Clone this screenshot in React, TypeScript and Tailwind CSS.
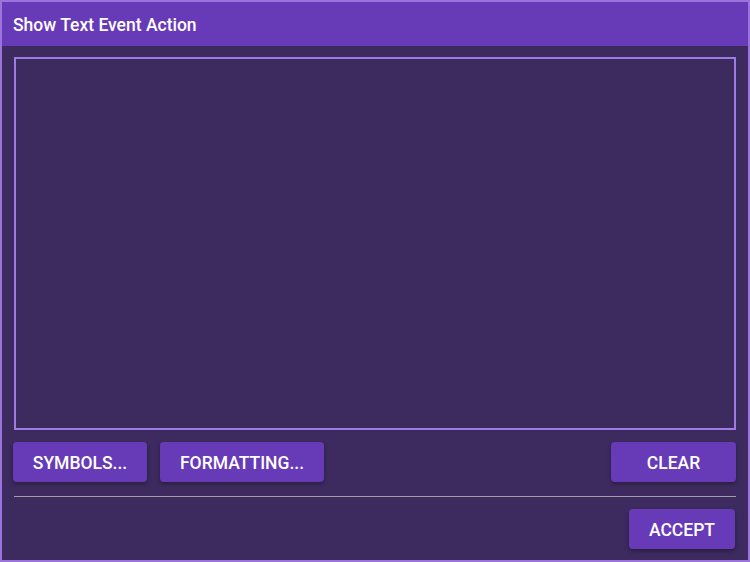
import React from "react";

const btn =
  "h-[40px] rounded-[4px] bg-[#673ab7] text-white text-[17.5px] font-medium uppercase flex items-center justify-center pt-[2px] shadow-[0_2px_4px_rgba(0,0,0,0.35)]";

export default function App() {
  return (
    <div
      className="w-[750px] h-[562px] border-2 border-[#9a73dc] bg-[#3d2b5f] flex flex-col"
      style={{ fontFamily: "Roboto, 'Liberation Sans', sans-serif" }}
    >
      <div className="h-[44px] bg-[#673ab7] flex items-center px-[11px] pt-[2px] shrink-0">
        <span className="text-white text-[17.5px] font-medium">Show Text Event Action</span>
      </div>
      <div className="flex-1 flex flex-col px-[12px] pt-[11px] pb-[11px]">
        <textarea className="h-[373px] w-full border-2 border-[#a07be3] bg-[#3d2b5f] resize-none outline-none text-white p-2" />
        <div className="flex mt-[12px] gap-[13px]">
          <button className={btn + " w-[134px] -ml-[1px]"}>Symbols...</button>
          <button className={btn + " w-[164px]"}>Formatting...</button>
          <div className="flex-1" />
          <button className={btn + " w-[125px]"}>Clear</button>
        </div>
        <div className="mt-[14px] h-px bg-[#a39db0]" />
        <div className="flex justify-end mt-[12px]">
          <button className={btn + " w-[106px] mr-[1px]"}>Accept</button>
        </div>
      </div>
    </div>
  );
}
